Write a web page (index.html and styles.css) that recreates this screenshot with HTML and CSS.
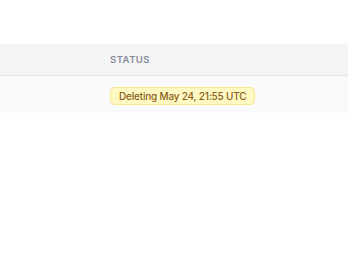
FILE: index.html
```html
<!DOCTYPE html>
<html>
<head>
    <title>Status</title>
    <link rel="stylesheet" href="styles.css">
</head>
<body>
    <div class="tabla">
        <div class="fila cabecera">
            <div class="celda primera"></div>
            <div class="celda">Status</div>
        </div>
        <div class="fila">
            <div class="celda primera"></div>
            <div class="celda">
                <span class="etiqueta">Deleting May 24, 21:55 UTC</span>
            </div>
        </div>
    </div>
</body>
</html>
```

FILE: styles.css
```css
body {
    font-family: Inter, "Liberation Sans", sans-serif;
    background-color: #fff;
    margin: 0;
    padding-top: 44px;
}

.fila {
    display: flex;
    align-items: center;
    height: 37px;
    background-color: #f9fafb;
}

.cabecera {
    height: 31px;
    background-color: #f3f4f6;
    border-bottom: 1px solid #e5e7eb;
}

.celda.primera {
    width: 110px;
}

.cabecera .celda {
    font-size: 9.5px;
    font-weight: 600;
    letter-spacing: 0.05em;
    text-transform: uppercase;
    color: #868a96;
}

.etiqueta {
    display: inline-block;
    padding: 2px 8px;
    font-size: 10px;
    font-weight: 550;
    letter-spacing: -0.2px;
    line-height: 12px;
    color: #8a5f20;
    background-color: #fef9c3;
    border: 1px solid #fde68a;
    border-radius: 5px;
}
```
